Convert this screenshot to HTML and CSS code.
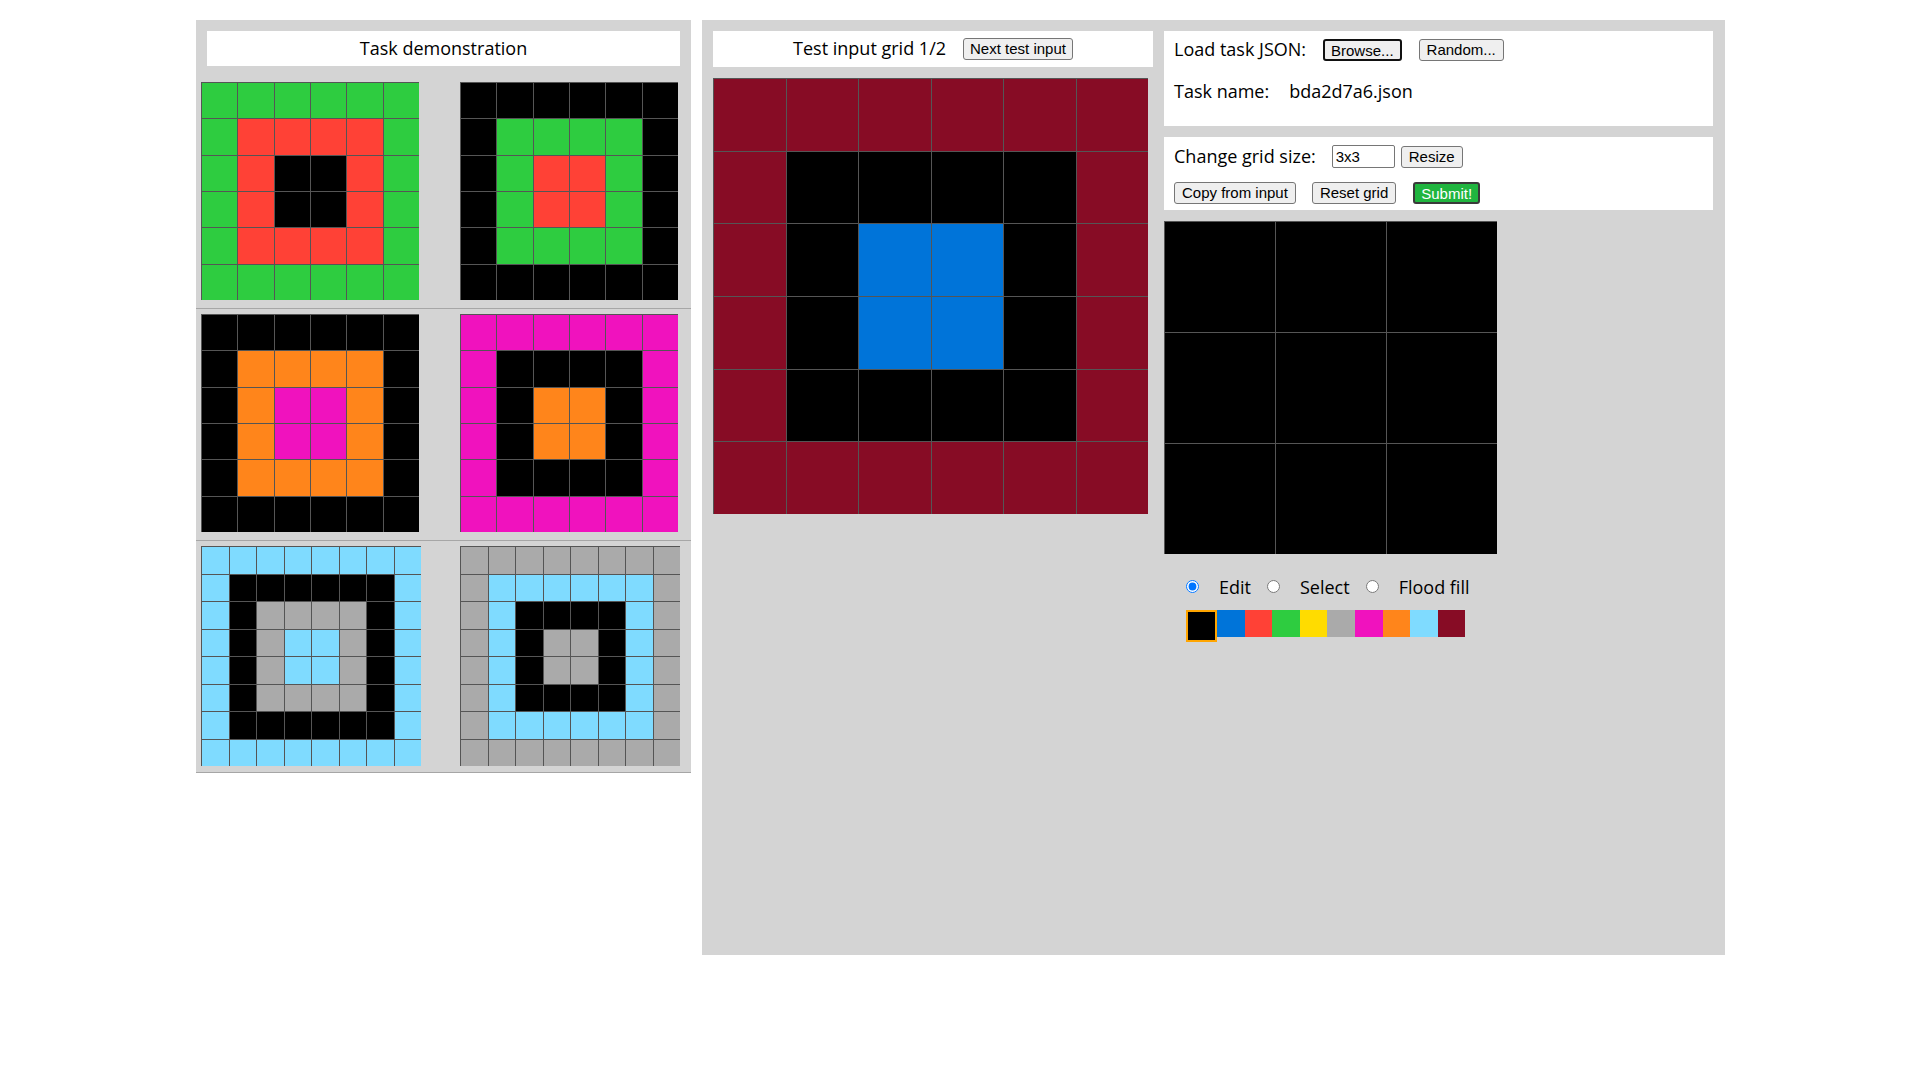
FILE: index.html
```html
<!DOCTYPE html>
<html lang="en">
<head>
<meta charset="utf-8">
<title>ARC testing interface</title>
<link rel="stylesheet" href="styles.css">
</head>
<body>
<div class="workspace">
  <div class="demo">
    <div class="title">Task demonstration</div>

    <div class="pair">
      <div class="grid n6 s218">
        <i class="c3"></i><i class="c3"></i><i class="c3"></i><i class="c3"></i><i class="c3"></i><i class="c3"></i>
        <i class="c3"></i><i class="c2"></i><i class="c2"></i><i class="c2"></i><i class="c2"></i><i class="c3"></i>
        <i class="c3"></i><i class="c2"></i><i class="c0"></i><i class="c0"></i><i class="c2"></i><i class="c3"></i>
        <i class="c3"></i><i class="c2"></i><i class="c0"></i><i class="c0"></i><i class="c2"></i><i class="c3"></i>
        <i class="c3"></i><i class="c2"></i><i class="c2"></i><i class="c2"></i><i class="c2"></i><i class="c3"></i>
        <i class="c3"></i><i class="c3"></i><i class="c3"></i><i class="c3"></i><i class="c3"></i><i class="c3"></i>
      </div>
      <div class="grid n6 s218">
        <i class="c0"></i><i class="c0"></i><i class="c0"></i><i class="c0"></i><i class="c0"></i><i class="c0"></i>
        <i class="c0"></i><i class="c3"></i><i class="c3"></i><i class="c3"></i><i class="c3"></i><i class="c0"></i>
        <i class="c0"></i><i class="c3"></i><i class="c2"></i><i class="c2"></i><i class="c3"></i><i class="c0"></i>
        <i class="c0"></i><i class="c3"></i><i class="c2"></i><i class="c2"></i><i class="c3"></i><i class="c0"></i>
        <i class="c0"></i><i class="c3"></i><i class="c3"></i><i class="c3"></i><i class="c3"></i><i class="c0"></i>
        <i class="c0"></i><i class="c0"></i><i class="c0"></i><i class="c0"></i><i class="c0"></i><i class="c0"></i>
      </div>
    </div>

    <div class="pair">
      <div class="grid n6 s218">
        <i class="c0"></i><i class="c0"></i><i class="c0"></i><i class="c0"></i><i class="c0"></i><i class="c0"></i>
        <i class="c0"></i><i class="c7"></i><i class="c7"></i><i class="c7"></i><i class="c7"></i><i class="c0"></i>
        <i class="c0"></i><i class="c7"></i><i class="c6"></i><i class="c6"></i><i class="c7"></i><i class="c0"></i>
        <i class="c0"></i><i class="c7"></i><i class="c6"></i><i class="c6"></i><i class="c7"></i><i class="c0"></i>
        <i class="c0"></i><i class="c7"></i><i class="c7"></i><i class="c7"></i><i class="c7"></i><i class="c0"></i>
        <i class="c0"></i><i class="c0"></i><i class="c0"></i><i class="c0"></i><i class="c0"></i><i class="c0"></i>
      </div>
      <div class="grid n6 s218">
        <i class="c6"></i><i class="c6"></i><i class="c6"></i><i class="c6"></i><i class="c6"></i><i class="c6"></i>
        <i class="c6"></i><i class="c0"></i><i class="c0"></i><i class="c0"></i><i class="c0"></i><i class="c6"></i>
        <i class="c6"></i><i class="c0"></i><i class="c7"></i><i class="c7"></i><i class="c0"></i><i class="c6"></i>
        <i class="c6"></i><i class="c0"></i><i class="c7"></i><i class="c7"></i><i class="c0"></i><i class="c6"></i>
        <i class="c6"></i><i class="c0"></i><i class="c0"></i><i class="c0"></i><i class="c0"></i><i class="c6"></i>
        <i class="c6"></i><i class="c6"></i><i class="c6"></i><i class="c6"></i><i class="c6"></i><i class="c6"></i>
      </div>
    </div>

    <div class="pair">
      <div class="grid n8 s220">
        <i class="c8"></i><i class="c8"></i><i class="c8"></i><i class="c8"></i><i class="c8"></i><i class="c8"></i><i class="c8"></i><i class="c8"></i>
        <i class="c8"></i><i class="c0"></i><i class="c0"></i><i class="c0"></i><i class="c0"></i><i class="c0"></i><i class="c0"></i><i class="c8"></i>
        <i class="c8"></i><i class="c0"></i><i class="c5"></i><i class="c5"></i><i class="c5"></i><i class="c5"></i><i class="c0"></i><i class="c8"></i>
        <i class="c8"></i><i class="c0"></i><i class="c5"></i><i class="c8"></i><i class="c8"></i><i class="c5"></i><i class="c0"></i><i class="c8"></i>
        <i class="c8"></i><i class="c0"></i><i class="c5"></i><i class="c8"></i><i class="c8"></i><i class="c5"></i><i class="c0"></i><i class="c8"></i>
        <i class="c8"></i><i class="c0"></i><i class="c5"></i><i class="c5"></i><i class="c5"></i><i class="c5"></i><i class="c0"></i><i class="c8"></i>
        <i class="c8"></i><i class="c0"></i><i class="c0"></i><i class="c0"></i><i class="c0"></i><i class="c0"></i><i class="c0"></i><i class="c8"></i>
        <i class="c8"></i><i class="c8"></i><i class="c8"></i><i class="c8"></i><i class="c8"></i><i class="c8"></i><i class="c8"></i><i class="c8"></i>
      </div>
      <div class="grid n8 s220">
        <i class="c5"></i><i class="c5"></i><i class="c5"></i><i class="c5"></i><i class="c5"></i><i class="c5"></i><i class="c5"></i><i class="c5"></i>
        <i class="c5"></i><i class="c8"></i><i class="c8"></i><i class="c8"></i><i class="c8"></i><i class="c8"></i><i class="c8"></i><i class="c5"></i>
        <i class="c5"></i><i class="c8"></i><i class="c0"></i><i class="c0"></i><i class="c0"></i><i class="c0"></i><i class="c8"></i><i class="c5"></i>
        <i class="c5"></i><i class="c8"></i><i class="c0"></i><i class="c5"></i><i class="c5"></i><i class="c0"></i><i class="c8"></i><i class="c5"></i>
        <i class="c5"></i><i class="c8"></i><i class="c0"></i><i class="c5"></i><i class="c5"></i><i class="c0"></i><i class="c8"></i><i class="c5"></i>
        <i class="c5"></i><i class="c8"></i><i class="c0"></i><i class="c0"></i><i class="c0"></i><i class="c0"></i><i class="c8"></i><i class="c5"></i>
        <i class="c5"></i><i class="c8"></i><i class="c8"></i><i class="c8"></i><i class="c8"></i><i class="c8"></i><i class="c8"></i><i class="c5"></i>
        <i class="c5"></i><i class="c5"></i><i class="c5"></i><i class="c5"></i><i class="c5"></i><i class="c5"></i><i class="c5"></i><i class="c5"></i>
      </div>
    </div>
  </div>

  <div class="test">
    <div class="input-col">
      <div class="input-title">
        <span class="lift">Test input grid 1/2</span>
        <button class="btn btn-next" type="button">Next test input</button>
      </div>
      <div class="grid n6 test-grid">
        <i class="c9"></i><i class="c9"></i><i class="c9"></i><i class="c9"></i><i class="c9"></i><i class="c9"></i>
        <i class="c9"></i><i class="c0"></i><i class="c0"></i><i class="c0"></i><i class="c0"></i><i class="c9"></i>
        <i class="c9"></i><i class="c0"></i><i class="c1"></i><i class="c1"></i><i class="c0"></i><i class="c9"></i>
        <i class="c9"></i><i class="c0"></i><i class="c1"></i><i class="c1"></i><i class="c0"></i><i class="c9"></i>
        <i class="c9"></i><i class="c0"></i><i class="c0"></i><i class="c0"></i><i class="c0"></i><i class="c9"></i>
        <i class="c9"></i><i class="c9"></i><i class="c9"></i><i class="c9"></i><i class="c9"></i><i class="c9"></i>
      </div>
    </div>

    <div class="output-col">
      <div class="box box-load">
        <div class="row">
          <span class="lift">Load task JSON:</span>
          <button class="btn btn-browse gap17" type="button">Browse...</button>
          <button class="btn gap17" type="button">Random...</button>
        </div>
        <div class="row row-name">
          <span>Task name:</span>
          <span class="task-name">bda2d7a6.json</span>
        </div>
      </div>

      <div class="box box-controls">
        <div class="row row-size">
          <label class="lift" for="grid_size">Change grid size:</label>
          <input id="grid_size" class="size-field" type="text" value="3x3">
          <button class="btn gap6" type="button">Resize</button>
        </div>
        <div class="row row-actions">
          <button class="btn" type="button">Copy from input</button>
          <button class="btn gap16" type="button">Reset grid</button>
          <button class="btn btn-submit gap17" type="button">Submit!</button>
        </div>
      </div>

      <div class="grid n3 out-grid">
        <i class="c0"></i><i class="c0"></i><i class="c0"></i>
        <i class="c0"></i><i class="c0"></i><i class="c0"></i>
        <i class="c0"></i><i class="c0"></i><i class="c0"></i>
      </div>

      <div class="tools">
        <input type="radio" name="tool" id="tool_edit" checked>
        <label for="tool_edit">Edit</label>
        <input type="radio" name="tool" id="tool_select">
        <label for="tool_select">Select</label>
        <input type="radio" name="tool" id="tool_fill">
        <label for="tool_fill">Flood fill</label>
      </div>

      <div class="palette">
        <div class="sym c0 selected"></div>
        <div class="sym c1"></div>
        <div class="sym c2"></div>
        <div class="sym c3"></div>
        <div class="sym c4"></div>
        <div class="sym c5"></div>
        <div class="sym c6"></div>
        <div class="sym c7"></div>
        <div class="sym c8"></div>
        <div class="sym c9"></div>
      </div>
    </div>
  </div>
</div>
</body>
</html>
```

FILE: styles.css
```css
* {
  box-sizing: border-box;
}

body {
  margin: 0;
  background: #fff;
  color: #000;
  font-family: "Open Sans", "Liberation Sans", sans-serif;
}

.workspace {
  display: flex;
  align-items: flex-start;
  gap: 11px;
  padding: 20px 0 0 196px;
}

/* ---------- demonstration panel ---------- */
.demo {
  width: 495px;
  background: #d4d4d4;
}

.title {
  margin: 11px;
  height: 35px;
  padding-bottom: 2px;
  background: #fff;
  font-size: 18px;
  display: flex;
  align-items: center;
  justify-content: center;
}

.pair {
  height: 232px;
  padding: 5px 0 0 5px;
  border-bottom: 1px solid #a6a6a6;
  display: grid;
  grid-template-columns: 259px auto;
  align-items: start;
}

/* ---------- grids ---------- */
.grid {
  display: grid;
  gap: 1px;
  padding: 1px 0 0 1px;
  background: #555;
}

.n3 { grid-template-columns: repeat(3, 1fr); grid-template-rows: repeat(3, 1fr); }
.n6 { grid-template-columns: repeat(6, 1fr); grid-template-rows: repeat(6, 1fr); }
.n8 { grid-template-columns: repeat(8, 1fr); grid-template-rows: repeat(8, 1fr); }

.s218 { width: 218px; height: 218px; }
.s220 { width: 220px; height: 220px; }

.grid i {
  display: block;
}

.c0 { background: #000000; }
.c1 { background: #0074d9; }
.c2 { background: #ff4136; }
.c3 { background: #2ecc40; }
.c4 { background: #ffdc00; }
.c5 { background: #aaaaaa; }
.c6 { background: #f012be; }
.c7 { background: #ff851b; }
.c8 { background: #7fdbff; }
.c9 { background: #870c25; }

/* ---------- test panel ---------- */
.test {
  width: 1023px;
  height: 935px;
  background: #d4d4d4;
  display: flex;
}

.input-col {
  width: 462px;
  padding: 11px;
}

.input-title {
  height: 36px;
  background: #fff;
  font-size: 18px;
  display: flex;
  align-items: center;
  justify-content: center;
  gap: 17px;
}

.lift {
  margin-bottom: 2px;
}

.test-grid {
  margin-top: 11px;
  width: 435px;
  height: 436px;
}

.output-col {
  width: 561px;
  padding-top: 11px;
}

.box {
  width: 549px;
  background: #fff;
  padding: 8px 10px 0;
  font-size: 18px;
}

.box + .box {
  margin-top: 11px;
}

.box-load { height: 95px; }
.box-controls { height: 73px; }

.row {
  display: flex;
  align-items: center;
  height: 22px;
}

.row-name {
  margin-top: 18px;
  height: 24px;
}

.row-size { height: 23px; }
.row-actions { margin-top: 14px; }

.task-name { margin-left: 20px; }

.gap17 { margin-left: 17px; }
.gap16 { margin-left: 16px; }
.gap6 { margin-left: 6px; }

/* ---------- buttons / fields ---------- */
.btn {
  height: 22px;
  margin-top: 0;
  margin-bottom: 0;
  margin-right: 0;
  padding: 0 7px;
  border: 1px solid #767676;
  border-radius: 3px;
  background: #efefef;
  color: #000;
  font-family: "Liberation Sans", Arial, sans-serif;
  font-size: 15px;
  line-height: 20px;
  white-space: nowrap;
}

.btn-next {
  padding: 0 6px;
}

.btn-browse {
  border: 2px solid #111;
  padding: 0 6px;
}

.btn-submit {
  background: #20b53f;
  color: #fff;
  border: 2px solid #3a3a3a;
  padding: 0 6px;
}

.size-field {
  width: 63px;
  height: 23px;
  margin: 0 0 0 16px;
  padding: 0 3px;
  border: 1px solid #767676;
  border-radius: 2px;
  font-family: "Liberation Sans", Arial, sans-serif;
  font-size: 15px;
  color: #000;
  background: #fff;
}

.out-grid {
  margin-top: 11px;
  width: 333px;
  height: 333px;
}

/* ---------- tools ---------- */
.tools {
  display: flex;
  align-items: center;
  height: 25px;
  margin-top: 20px;
  padding-left: 22px;
  font-size: 18px;
}

.tools input {
  width: 13px;
  height: 13px;
  margin: 0 20px 0 0;
}

.tools label {
  margin-right: 16px;
}

.palette {
  display: flex;
  align-items: flex-start;
  margin-top: 11px;
  padding-left: 22px;
}

.sym {
  width: 27.6px;
  height: 27px;
}

.sym.selected {
  width: 31px;
  height: 32px;
  border: 2px solid #ffa500;
}
```
